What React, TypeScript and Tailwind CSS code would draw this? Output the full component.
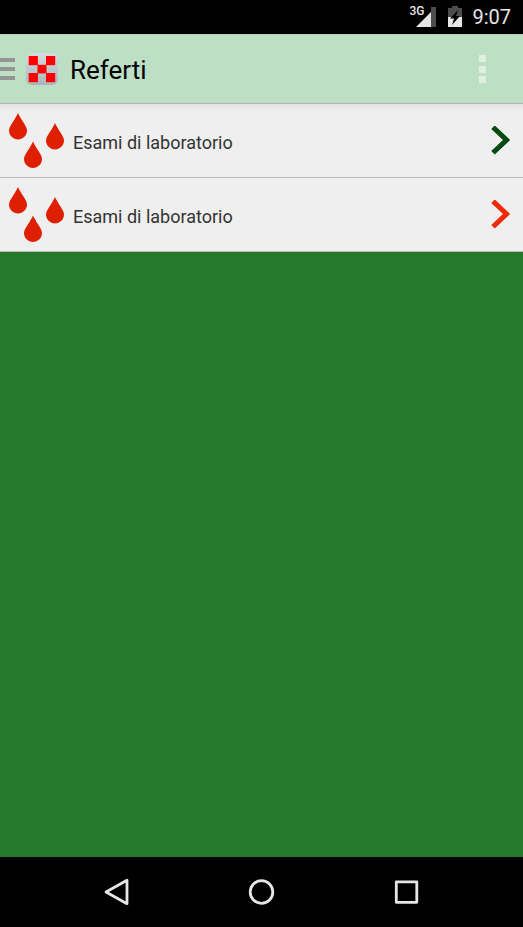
import React from 'react';

const reports = [
  { id: 1, title: 'Esami di laboratorio', arrow: 'text-[#04490f]' },
  { id: 2, title: 'Esami di laboratorio', arrow: 'text-[#ee2a08]' }
];

const Drops = () => (
  <svg width="56" height="56" viewBox="0 0 56 56" fill="#df2000" aria-hidden="true">
    <defs>
      <path
        id="drop"
        d="M9 0 C10 2.5 12 5.5 14 8.8 C16.2 12.4 18 14.8 18 17.6 C18 22.6 14 26.4 9 26.4 C4 26.4 0 22.6 0 17.6 C0 14.8 1.8 12.4 4 8.8 C6 5.5 8 2.5 9 0 Z"
      />
    </defs>
    <use href="#drop" x="0" y="0" />
    <use href="#drop" x="37" y="10" />
    <use href="#drop" x="15" y="28.5" />
  </svg>
);

const Logo = () => (
  <svg width="32" height="32" viewBox="0 0 32 32" aria-hidden="true">
    <defs>
      <linearGradient id="plate" x1="0" y1="0" x2="0" y2="1">
        <stop offset="0" stopColor="#d3dde0" />
        <stop offset="1" stopColor="#a9b6bb" />
      </linearGradient>
    </defs>
    <rect width="32" height="32" rx="6" fill="url(#plate)" />
    <g fill="#ff0000">
      <rect x="2.7" y="3" width="9.2" height="9.2" />
      <rect x="20" y="3" width="9.2" height="9.2" />
      <rect x="11.5" y="11.8" width="9" height="8.6" />
      <rect x="2.7" y="20" width="9.2" height="9.2" />
      <rect x="20" y="20" width="9.2" height="9.2" />
    </g>
  </svg>
);

const StatusBar = () => (
  <div className="flex h-[34px] items-center justify-end bg-black pr-3 text-white">
    <span className="self-start pt-1 text-[12px] leading-[14px] font-medium text-[#e6e6e6]">3G</span>
    <svg className="-ml-2" width="21" height="21" viewBox="0 0 21 21" aria-hidden="true">
      <path d="M0 20 L20 0 V20 Z" fill="#e6e6e6" />
      <path d="M15 0 H20 V20 H15 Z" fill="#4d4d4d" />
    </svg>
    <svg className="ml-[11px]" width="14" height="22" viewBox="0 0 14 22" aria-hidden="true">
      <path d="M4 0 H10 V2 H14 V11 H0 V2 H4 Z" fill="#4d4d4d" />
      <path d="M0 11 H14 V21 H0 Z" fill="#e6e6e6" />
      <path d="M10 4 L2 12.5 H6 L4 19 L12 10 H8 Z" fill="#000" />
    </svg>
    <time className="ml-[10px] text-[20px] leading-6 text-[#e6e6e6]">9:07</time>
  </div>
);

const Header = () => (
  <header className="flex h-[70px] items-center border-t border-b border-t-[#aed2b7] border-b-[#b3b5b3] bg-[#bddfc4]">
    <button type="button" aria-label="Menu" className="flex items-center gap-[11px]">
      <svg width="15" height="22" viewBox="0 0 15 22" fill="#949494" aria-hidden="true">
        <path d="M0 0 H15 V4 H0 Z M0 9 H15 V13 H0 Z M0 18 H15 V22 H0 Z" />
      </svg>
      <Logo />
    </button>
    <h1 className="ml-3 pt-[2px] text-[26px] leading-8 text-black">Referti</h1>
    <button type="button" aria-label="Altre opzioni" className="mr-9 ml-auto">
      <svg width="8" height="30" viewBox="0 0 8 30" fill="#dff0e2" aria-hidden="true">
        <path d="M0 1 H7 V8 H0 Z M0 12 H7 V19 H0 Z M0 22 H7 V29 H0 Z" />
      </svg>
    </button>
  </header>
);

const NavBar = () => (
  <nav className="flex h-[70px] items-center justify-center gap-[115px] bg-black">
    <button type="button" aria-label="Indietro">
      <svg width="30" height="30" viewBox="0 0 30 30" fill="none" stroke="#e6e6e6" strokeWidth="2.8" strokeLinejoin="round" aria-hidden="true">
        <path d="M25 3.3 V26.7 L4 15 Z" />
      </svg>
    </button>
    <button type="button" aria-label="Home">
      <svg width="30" height="30" viewBox="0 0 30 30" fill="none" stroke="#e6e6e6" strokeWidth="2.8" aria-hidden="true">
        <circle cx="14.5" cy="15" r="11.3" />
      </svg>
    </button>
    <button type="button" aria-label="Recenti">
      <svg width="30" height="30" viewBox="0 0 30 30" fill="none" stroke="#e6e6e6" strokeWidth="2.8" strokeLinejoin="round" aria-hidden="true">
        <rect x="4.3" y="4.8" width="20.5" height="20.5" />
      </svg>
    </button>
  </nav>
);

const App = () => {
  return (
    <div className="flex min-h-screen flex-col bg-[#26782a] font-[Roboto,sans-serif]">
      <StatusBar />
      <Header />
      <main className="flex-1">
        <ul className="bg-gradient-to-b from-[#e2e2e2] to-[#efefef] to-[8px]">
          {reports.map((report) => (
            <li key={report.id} className="border-b border-[#bdbdbd]">
              <button type="button" className="flex h-[73px] w-full items-center pr-3 pl-[9px] text-left">
                <Drops />
                <span className="ml-2 pt-1 text-[18px] leading-6 text-[#333333]">{report.title}</span>
                <svg
                  className={`ml-auto ${report.arrow}`}
                  width="20"
                  height="30"
                  viewBox="0 0 20 30"
                  fill="none"
                  stroke="currentColor"
                  strokeWidth="5"
                  aria-hidden="true"
                >
                  <path d="M2 1.2 L15.5 14 L2 26.8" />
                </svg>
              </button>
            </li>
          ))}
        </ul>
      </main>
      <NavBar />
    </div>
  );
};

export default App;
